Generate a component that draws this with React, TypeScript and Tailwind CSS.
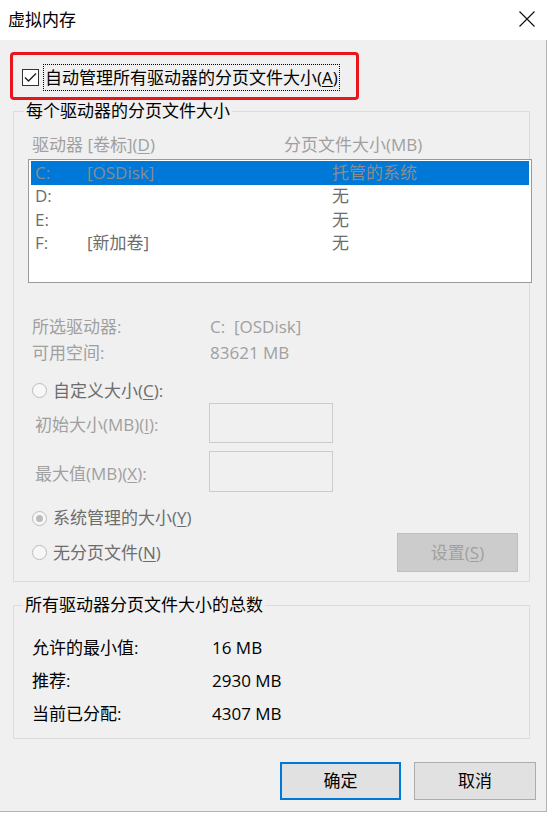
import React from "react";

function Radio({ checked }: { checked?: boolean }) {
  return (
    <span className="w-[15px] h-[15px] rounded-full border border-[#bcbcbc] bg-[#f7f7f7] flex items-center justify-center shrink-0">
      {checked && <span className="w-[7px] h-[7px] rounded-full bg-[#bcbcbc]" />}
    </span>
  );
}

function Key({ k }: { k: string }) {
  return <u className="underline underline-offset-[2px]">{k}</u>;
}

export default function App() {
  return (
    <div className="w-[550px] h-[816px] bg-white text-[17px] leading-[20px] text-black font-['Open_Sans','Noto_Sans_CJK_SC',sans-serif]">
      {/* Title bar */}
      <div className="h-[40px] flex items-center justify-between pl-[8px] pr-[15px]">
        <span className="pb-[2px] font-['Noto_Sans_CJK_SC',sans-serif]">虚拟内存</span>
        <svg width="16" height="16" viewBox="0 0 16 16" className="mb-[2px]">
          <path d="M0.5 0.5L15.5 15.5M15.5 0.5L0.5 15.5" stroke="#111" strokeWidth="1.2" />
        </svg>
      </div>

      {/* Body */}
      <div className="w-[547px] h-[772px] bg-[#f0f0f0] border-r border-b border-[#b4b4b4] flex flex-col">
        {/* Highlighted checkbox */}
        <div className="mt-[12px] ml-[10px] w-[349px] h-[48px] border-[3px] border-[#e8161b] rounded-[4px] flex items-center pl-[9px] pt-[2px]">
          <span className="w-[17px] h-[17px] border border-[#333] bg-white flex items-center justify-center shrink-0">
            <svg width="15" height="15" viewBox="0 0 15 15">
              <polyline points="2,7.5 5.5,11 13,3.5" fill="none" stroke="#222" strokeWidth="1.4" />
            </svg>
          </span>
          <span className="ml-[4px] border border-dotted border-black px-[1px] leading-[25px] whitespace-nowrap">
            自动管理所有驱动器的分页文件大小(<Key k="A" />)
          </span>
        </div>

        {/* Group 1 */}
        <fieldset className="mt-[1px] ml-[13px] w-[517px] min-w-0 border border-[#dcdcdc] pb-[9px]">
          <legend className="ml-[10px] px-[2px] leading-[20px]">每个驱动器的分页文件大小</legend>
          <div className="pl-[14px] pt-[12px] min-w-0">
            <div className="h-[24px] flex items-center pl-[4px] text-[#a0a0a0]">
              <span className="w-[252px]">
                驱动器 [卷标](<Key k="D" />)
              </span>
              <span>分页文件大小(MB)</span>
            </div>
            <div className="mt-[2px] w-[504px] h-[124px] border border-[#9a9a9a] bg-white px-[2px] pt-[1px]">
              {[
                { d: "C:", l: "[OSDisk]", s: "托管的系统", sel: true },
                { d: "D:", l: "", s: "无" },
                { d: "E:", l: "", s: "无" },
                { d: "F:", l: "[新加卷]", s: "无" },
              ].map((r) => (
                <div
                  key={r.d}
                  className={
                    r.sel
                      ? "h-[23.5px] flex items-center pl-[4px] bg-[#0078d7] text-[#8c8c8c]"
                      : "h-[23.5px] flex items-center pl-[4px] text-[#6d6d6d]"
                  }
                >
                  <span className="w-[52px]">{r.d}</span>
                  <span className="w-[245px]">{r.l}</span>
                  <span>{r.s}</span>
                </div>
              ))}
            </div>

            <div className="mt-[31px] h-[26px] flex items-center pl-[4px] text-[#a0a0a0]">
              <span className="w-[178px]">所选驱动器:</span>
              <span className="whitespace-pre">C:  [OSDisk]</span>
            </div>
            <div className="h-[26px] flex items-center pl-[4px] text-[#a0a0a0]">
              <span className="w-[178px]">可用空间:</span>
              <span>83621 MB</span>
            </div>

            <div className="mt-[12px] h-[25px] flex items-center pl-[4px] gap-[6px] text-[#6d6d6d]">
              <Radio />
              <span>
                自定义大小(<Key k="C" />):
              </span>
            </div>
            <div className="h-[40px] flex">
              <span className="w-[181px] pl-[7px] pt-[4px] flex items-center text-[#a0a0a0]">
                初始大小(MB)(<Key k="I" />):
              </span>
              <span className="w-[124px] h-[40px] border border-[#cccccc] bg-[#f0f0f0]" />
            </div>
            <div className="mt-[8px] h-[41px] flex">
              <span className="w-[181px] pl-[7px] pt-[4px] flex items-center text-[#a0a0a0]">
                最大值(MB)(<Key k="X" />):
              </span>
              <span className="w-[124px] h-[41px] border border-[#cccccc] bg-[#f0f0f0]" />
            </div>

            <div className="mt-[13px] h-[26px] flex items-center pl-[4px] gap-[6px] text-[#6d6d6d]">
              <Radio checked />
              <span>
                系统管理的大小(<Key k="Y" />)
              </span>
            </div>
            <div className="mt-[2px] h-[39px] flex items-center pl-[4px]">
              <Radio />
              <span className="ml-[6px] text-[#6d6d6d]">
                无分页文件(<Key k="N" />)
              </span>
              <span className="ml-auto mr-[11px] w-[121px] h-[39px] bg-[#cccccc] border border-[#bfbfbf] flex items-center justify-center text-[#a0a0a0]">
                设置(<Key k="S" />)
              </span>
            </div>
          </div>
        </fieldset>

        {/* Group 2 */}
        <fieldset className="mt-[13px] ml-[13px] w-[517px] min-w-0 border border-[#dcdcdc] pb-[8px]">
          <legend className="ml-[9px] px-[2px] leading-[20px]">所有驱动器分页文件大小的总数</legend>
          <div className="pl-[18px] pt-[16px]">
            {[
              ["允许的最小值:", "16 MB"],
              ["推荐:", "2930 MB"],
              ["当前已分配:", "4307 MB"],
            ].map(([k, v]) => (
              <div key={k} className="h-[33px] flex items-center">
                <span className="w-[180px]">{k}</span>
                <span>{v}</span>
              </div>
            ))}
          </div>
        </fieldset>

        {/* Buttons */}
        <div className="mt-[23px] flex justify-end gap-[13px] pr-[10px]">
          <span className="w-[121px] h-[38px] bg-[#e1e1e1] border-2 border-[#0078d7] flex items-center justify-center">
            确定
          </span>
          <span className="w-[122px] h-[38px] bg-[#e1e1e1] border border-[#adadad] flex items-center justify-center">
            取消
          </span>
        </div>
      </div>
    </div>
  );
}
